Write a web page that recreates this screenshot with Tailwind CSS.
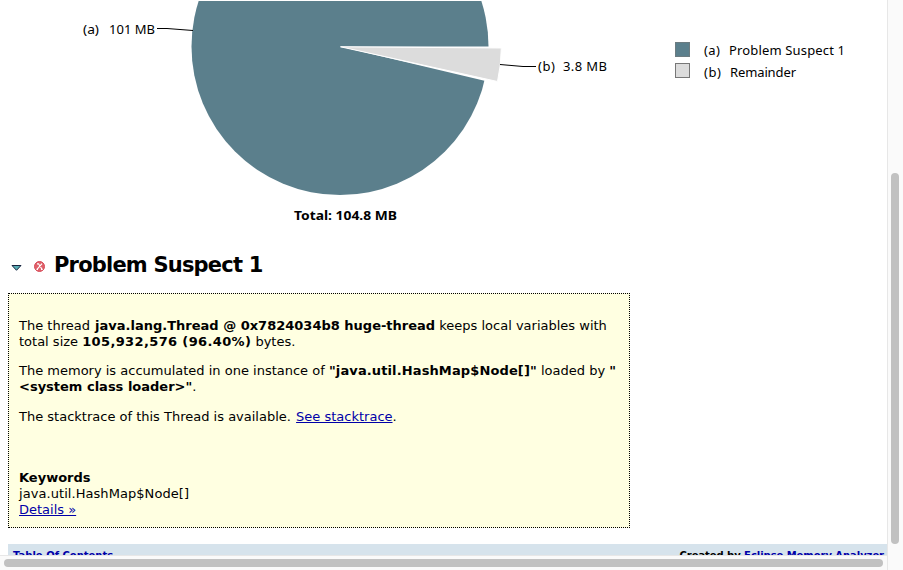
<!DOCTYPE html>
<html lang="en">
<head>
<meta charset="utf-8">
<title>Leak Suspects</title>
<script src="https://cdn.jsdelivr.net/npm/@tailwindcss/browser@4"></script>
</head>
<body class="bg-white">
<div class="grid h-[570px] w-[903px] grid-cols-[887px_16px] grid-rows-[555px_15px] overflow-hidden font-['DejaVu_Sans',Verdana,sans-serif] text-[13px] leading-4 text-black">
  <main class="overflow-hidden">
    <svg class="block" width="887" height="240" viewBox="0 0 887 240" font-family="'Noto Sans','Open Sans',sans-serif" font-size="13">
      <defs><clipPath id="top"><rect x="0" y="1" width="887" height="239"/></clipPath></defs>
      <circle cx="340" cy="46.5" r="148.5" fill="#5b7f8c" clip-path="url(#top)"/>
      <path d="M340 46.500H490V80.800H484.500Z" fill="#fff"/>
      <path d="M340.500 46.800L501.300 48A161 161 0 0 1 497.500 81.500Z" fill="#dcdcdc" stroke="#fff" stroke-width="1"/>
      <path d="M157 28.500H167L193 30.500M500 64.500L523 66.500H536" fill="none" stroke="#000"/>
      <text x="83" y="34" textLength="16" lengthAdjust="spacingAndGlyphs">(a)</text>
      <text x="109" y="34" textLength="46">101 MB</text>
      <text x="538" y="71" textLength="17">(b)</text>
      <text x="563" y="71" textLength="44">3.8 MB</text>
      <text x="294" y="220" font-weight="700" font-size="12.500" textLength="103" lengthAdjust="spacingAndGlyphs">Total: 104.8 MB</text>
      <rect x="675.500" y="42.500" width="14" height="14" fill="#5b7f8c" stroke="#6c7b80"/>
      <rect x="675.500" y="63.500" width="14" height="14" fill="#dcdcdc" stroke="#777"/>
      <text x="704" y="55" textLength="16">(a)</text>
      <text x="729" y="55" textLength="116">Problem Suspect 1</text>
      <text x="704" y="77" textLength="17">(b)</text>
      <text x="730" y="77" textLength="66">Remainder</text>
    </svg>
    <div class="flex h-[53px] items-start pt-3 pl-[11px]">
      <svg class="mt-[13px] mr-[12px]" width="11" height="6" viewBox="0 0 11 6"><path d="M1 .5H10L5.500 5.300Z" fill="#58aeb5" stroke="#16233e"/></svg>
      <svg class="mt-[9px]" width="12" height="12" viewBox="0 0 12 12"><circle cx="5.500" cy="5.500" r="5" fill="#e0606a" stroke="#d64a57"/><path d="M3 2.800H4.500L8 8.300M8 2.700L3 8.300M2.500 8.300H4M7 8.300H8.700" fill="none" stroke="#fff" stroke-width="1.200"/></svg>
      <h1 class="ml-[8px] text-[21px] leading-[26px] font-bold whitespace-nowrap tracking-[-0.8px]">Problem Suspect 1</h1>
    </div>
    <section class="ml-2 h-[235px] w-[622px] border border-dotted border-black bg-[#ffffe1] pt-[24px] pl-[10px] whitespace-nowrap">
      <p>The thread <b class="ml-px">java.lang.Thread @ 0x7824034b8 huge-thread</b> keeps local variables with<br>total size <b class="tracking-[0.36px]">105,932,576 (96.40%)</b> bytes.</p>
      <p class="mt-[13px]">The memory is accumulated in one instance of <b class="tracking-[0.12px]">"java.util.HashMap$Node[]"</b> loaded by <b>"<br>&lt;system class loader&gt;"</b>.</p>
      <p class="mt-[14px]">The stacktrace of this Thread is available. <a class="ml-px text-[#0000a8] underline">See stacktrace</a>.</p>
      <p class="mt-[45px]"><b>Keywords</b><br><span class="tracking-[0.06px]">java.util.HashMap$Node[]</span><br><a class="text-[#0000a8] underline">Details »</a></p>
    </section>
    <footer class="mt-4 ml-2 flex h-[22px] justify-between bg-[#d6e3ec] px-[5px] pt-[5px] pr-[3px] text-[10px] leading-[14px] font-bold whitespace-nowrap">
      <a class="text-[#0000a8]">Table Of Contents</a>
      <span class="tracking-[-0.05px]">Created by <a class="text-[#0000a8]">Eclipse Memory Analyzer</a></span>
    </footer>
  </main>
  <div class="row-span-2 border-l border-[#e7e7e7] bg-[#fafafa] pr-px"><div class="mt-[173px] ml-[3px] h-[371px] w-2 rounded-full bg-[#c1c1c1]"></div></div>
  <div class="border-t border-[#e7e7e7] bg-[#fafafa]"><div class="mt-[3px] ml-1 h-2 w-[879px] rounded-full bg-[#c1c1c1]"></div></div>
</div>
</body>
</html>
